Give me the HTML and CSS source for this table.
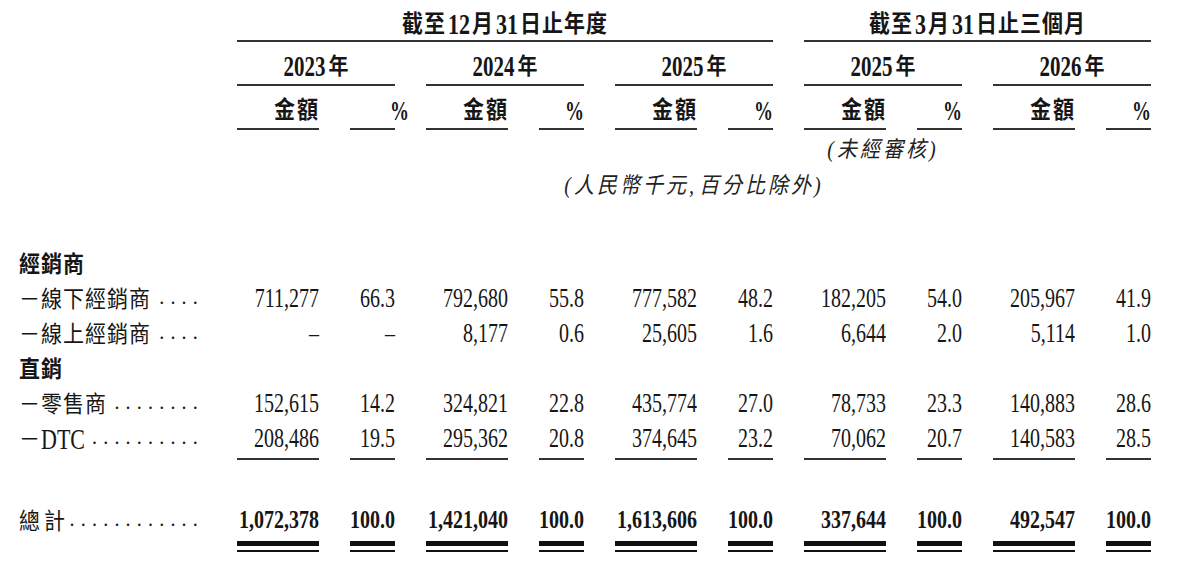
FILE: index.html
```html
<!DOCTYPE html>
<html lang="zh-Hant">
<head>
<meta charset="utf-8">
<title>收入明細</title>
<link rel="stylesheet" href="styles.css">
</head>
<body>
<div class="page">
  <div class="row hrow1">
    <div class="lab"></div>
    <div class="hspan span3"><span class="cj">截至<span class="hn">12</span>月<span class="hn">31</span>日止年度</span></div>
    <div class="hspan span2"><span class="cj">截至<span class="hn">3</span>月<span class="hn">31</span>日止三個月</span></div>
  </div>

  <div class="row hrow2">
    <div class="lab"></div>
    <div class="groups">
      <div class="yr"><span class="cj"><span class="hn">2023</span>年</span></div>
      <div class="yr"><span class="cj"><span class="hn">2024</span>年</span></div>
      <div class="yr"><span class="cj"><span class="hn">2025</span>年</span></div>
      <div class="yr"><span class="cj"><span class="hn">2025</span>年</span></div>
      <div class="yr"><span class="cj"><span class="hn">2026</span>年</span></div>
    </div>
  </div>

  <div class="row hrow3">
    <div class="lab"></div>
    <div class="groups">
      <div class="grp"><div class="amt"><span class="cj">金額</span></div><div class="pct"><span class="pc pc-off">%</span></div></div>
      <div class="grp"><div class="amt"><span class="cj">金額</span></div><div class="pct"><span class="pc">%</span></div></div>
      <div class="grp"><div class="amt"><span class="cj">金額</span></div><div class="pct"><span class="pc">%</span></div></div>
      <div class="grp"><div class="amt"><span class="cj">金額</span></div><div class="pct"><span class="pc">%</span></div></div>
      <div class="grp"><div class="amt"><span class="cj">金額</span></div><div class="pct"><span class="pc">%</span></div></div>
    </div>
  </div>

  <div class="row hrow4">
    <div class="lab"></div>
    <div class="groups">
      <div class="grp"></div>
      <div class="grp"></div>
      <div class="grp"></div>
      <div class="grp note"><span class="cj">(未經審核)</span></div>
      <div class="grp"></div>
    </div>
  </div>

  <div class="row hrow5">
    <div class="lab"></div>
    <div class="note wide"><span class="cj">(人民幣千元<span class="cm">,</span>百分比除外)</span></div>
  </div>

  <div class="tbody">
    <div class="row data sec">
      <div class="lab"><span class="lbl">經銷商</span></div>
    </div>

    <div class="row data">
      <div class="lab"><span class="lbl">－線下經銷商</span><span class="dots">....</span></div>
      <div class="groups">
        <div class="grp"><div class="amt"><span class="n">711,277</span></div><div class="pct"><span class="n">66.3</span></div></div>
        <div class="grp"><div class="amt"><span class="n">792,680</span></div><div class="pct"><span class="n">55.8</span></div></div>
        <div class="grp"><div class="amt"><span class="n">777,582</span></div><div class="pct"><span class="n">48.2</span></div></div>
        <div class="grp"><div class="amt"><span class="n">182,205</span></div><div class="pct"><span class="n">54.0</span></div></div>
        <div class="grp"><div class="amt"><span class="n">205,967</span></div><div class="pct"><span class="n">41.9</span></div></div>
      </div>
    </div>

    <div class="row data">
      <div class="lab"><span class="lbl">－線上經銷商</span><span class="dots">....</span></div>
      <div class="groups">
        <div class="grp"><div class="amt"><span class="n">–</span></div><div class="pct"><span class="n">–</span></div></div>
        <div class="grp"><div class="amt"><span class="n">8,177</span></div><div class="pct"><span class="n">0.6</span></div></div>
        <div class="grp"><div class="amt"><span class="n">25,605</span></div><div class="pct"><span class="n">1.6</span></div></div>
        <div class="grp"><div class="amt"><span class="n">6,644</span></div><div class="pct"><span class="n">2.0</span></div></div>
        <div class="grp"><div class="amt"><span class="n">5,114</span></div><div class="pct"><span class="n">1.0</span></div></div>
      </div>
    </div>

    <div class="row data sec">
      <div class="lab"><span class="lbl">直銷</span></div>
    </div>

    <div class="row data">
      <div class="lab"><span class="lbl">－零售商</span><span class="dots">........</span></div>
      <div class="groups">
        <div class="grp"><div class="amt"><span class="n">152,615</span></div><div class="pct"><span class="n">14.2</span></div></div>
        <div class="grp"><div class="amt"><span class="n">324,821</span></div><div class="pct"><span class="n">22.8</span></div></div>
        <div class="grp"><div class="amt"><span class="n">435,774</span></div><div class="pct"><span class="n">27.0</span></div></div>
        <div class="grp"><div class="amt"><span class="n">78,733</span></div><div class="pct"><span class="n">23.3</span></div></div>
        <div class="grp"><div class="amt"><span class="n">140,883</span></div><div class="pct"><span class="n">28.6</span></div></div>
      </div>
    </div>

    <div class="row data last">
      <div class="lab"><span class="lbl">－<span class="n dtc">DTC</span></span><span class="dots">..........</span></div>
      <div class="groups">
        <div class="grp"><div class="amt"><span class="n">208,486</span></div><div class="pct"><span class="n">19.5</span></div></div>
        <div class="grp"><div class="amt"><span class="n">295,362</span></div><div class="pct"><span class="n">20.8</span></div></div>
        <div class="grp"><div class="amt"><span class="n">374,645</span></div><div class="pct"><span class="n">23.2</span></div></div>
        <div class="grp"><div class="amt"><span class="n">70,062</span></div><div class="pct"><span class="n">20.7</span></div></div>
        <div class="grp"><div class="amt"><span class="n">140,583</span></div><div class="pct"><span class="n">28.5</span></div></div>
      </div>
    </div>

    <div class="row data tot">
      <div class="lab"><span class="lbl">總計</span><span class="dots">............</span></div>
      <div class="groups">
        <div class="grp"><div class="amt"><span class="n">1,072,378</span></div><div class="pct"><span class="n">100.0</span></div></div>
        <div class="grp"><div class="amt"><span class="n">1,421,040</span></div><div class="pct"><span class="n">100.0</span></div></div>
        <div class="grp"><div class="amt"><span class="n">1,613,606</span></div><div class="pct"><span class="n">100.0</span></div></div>
        <div class="grp"><div class="amt"><span class="n">337,644</span></div><div class="pct"><span class="n">100.0</span></div></div>
        <div class="grp"><div class="amt"><span class="n">492,547</span></div><div class="pct"><span class="n">100.0</span></div></div>
      </div>
    </div>
  </div>
</div>
</body>
</html>
```

FILE: styles.css
```css
* { box-sizing: border-box; }

body {
  margin: 0;
  background: #ffffff;
  color: #161616;
  font-family: "Noto Sans CJK TC", "Noto Sans CJK SC", sans-serif;
}

.page {
  width: 1200px;
  height: 567px;
  overflow: hidden;
}

.row { display: flex; }

.lab { flex: none; width: 237px; }

.groups { display: flex; gap: 31px; }

.grp { display: flex; flex: none; width: 158px; }

.amt { flex: none; width: 82px; text-align: right; }

.pct { flex: none; width: 45px; margin-left: 31px; text-align: right; }

/* vertically stretched CJK runs, as in the printed page */
.cj {
  display: inline-block;
  line-height: 1.2;
  transform: scaleY(1.12);
}

/* ---------- header ---------- */
.hrow1 { height: 42px; }

.hspan {
  text-align: center;
  font-weight: 700;
  font-size: 21px;
  letter-spacing: 1px;
  padding-top: 4px;
  line-height: 36px;
  border-bottom: 2px solid #333;
}

.span3 { width: 536px; }
.span2 { width: 347px; margin-left: 31px; }

.hn {
  display: inline-block;
  font-family: "Liberation Serif", serif;
  font-weight: 700;
  font-size: 22px;
  line-height: 1;
  letter-spacing: 0;
  margin: 0 2px;
  transform: scaleY(1.2);
}

.yr {
  flex: none;
  width: 158px;
  height: 44px;
  padding-top: 4px;
  line-height: 38px;
  text-align: center;
  font-weight: 700;
  font-size: 20px;
  border-bottom: 2px solid #333;
}

.yr .hn { font-size: 21px; margin: 0 3px 0 0; transform: scaleY(1.23); }

.hrow3 .amt,
.hrow3 .pct {
  height: 44px;
  padding-top: 3px;
  line-height: 39px;
  font-weight: 700;
  font-size: 21px;
  border-bottom: 2px solid #333;
}

.hrow3 .amt .cj { letter-spacing: 2px; margin-right: -1px; }

.pc {
  display: inline-block;
  font-family: "Liberation Serif", serif;
  font-weight: 700;
  font-size: 19px;
  line-height: 1;
  transform: scaleY(1.42);
}

.pc-off { margin-right: -14px; }

.hrow4 { height: 39px; }

.note {
  font-family: "Liberation Serif", "Noto Sans CJK TC", serif;
  font-style: italic;
  font-size: 20px;
  letter-spacing: 3px;
  color: #222;
  justify-content: center;
}

.hrow4 .note { padding-top: 8px; line-height: 31px; }

.wide {
  flex: none;
  width: 914px;
  text-align: center;
  line-height: 32px;
}

.cm { letter-spacing: 5px; }

/* ---------- body ---------- */
.tbody { margin-top: 44px; }

.data { height: 35px; line-height: 35px; }

.data .lab {
  display: flex;
  align-items: center;
  padding-left: 19px;
  padding-right: 33px;
  font-size: 21px;
  letter-spacing: 1px;
}

.lbl {
  display: inline-block;
  line-height: 1.2;
  transform: scaleY(1.1);
}

.sec .lab { font-weight: 700; }

.dots {
  margin-left: auto;
  align-self: stretch;
  font-family: "Liberation Serif", serif;
  font-size: 20px;
  letter-spacing: 6.2px;
}

.data .amt,
.data .pct {
  font-family: "Liberation Serif", serif;
  font-size: 20px;
}

.n {
  display: inline-block;
  font-family: "Liberation Serif", serif;
  font-size: 20px;
  line-height: 1;
  letter-spacing: 0;
  transform: scaleY(1.38);
}

.dtc { font-size: 22px; transform: scaleY(1.24); }

.last { height: 40px; }

.last .lab { padding-bottom: 5px; }

.last .amt,
.last .pct {
  padding-bottom: 3px;
  border-bottom: 2px solid #333;
}

.tot { margin-top: 42px; height: 50px; }

.tot .lab { letter-spacing: 4px; padding-bottom: 15px; }

.tot .amt,
.tot .pct {
  padding-bottom: 15px;
  background: linear-gradient(#111 0 5px, transparent 5px 9px, #111 9px 11px) left bottom / 100% 11px no-repeat;
}

.tot .n { font-weight: 700; transform: scaleY(1.3); }
```
